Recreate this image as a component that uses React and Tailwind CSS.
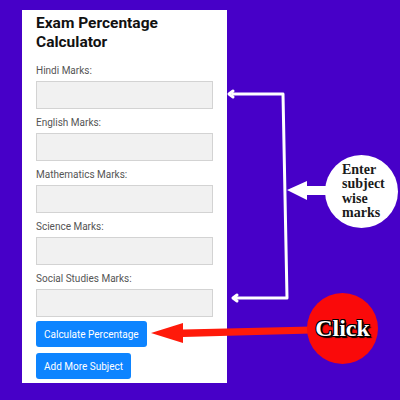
import React from "react";

const subjects = ["Hindi Marks:", "English Marks:", "Mathematics Marks:", "Science Marks:", "Social Studies Marks:"];

function Field({ label }) {
  return (
    <div className="mb-[7px]">
      <label className="block text-[10px] leading-[13px] text-[#555] mb-[4px]">{label}</label>
      <input
        type="text"
        className="block w-full h-[28px] bg-[#f1f1f1] border border-[#d3d3d3] outline-none"
      />
    </div>
  );
}

export default function App() {
  return (
    <div
      className="relative w-[400px] h-[400px] overflow-hidden bg-[#4700c8] pt-[10px] pl-[22px]"
      style={{ fontFamily: "Roboto, 'Liberation Sans', sans-serif" }}
    >
      <div className="w-[205px] h-[373px] bg-white px-[14px] pt-[4px]">
        <h1 className="text-[15.5px] leading-[19px] font-bold text-[#111] mb-[12px]">
          Exam Percentage Calculator
        </h1>
        {subjects.map((s) => (
          <Field key={s} label={s} />
        ))}
        <div className="flex flex-col items-start gap-[6px] -mt-[3px]">
          <button className="h-[26px] px-[8px] rounded-[3px] bg-[#0d84ff] text-white text-[10px]">
            Calculate Percentage
          </button>
          <button className="h-[26px] px-[8px] rounded-[3px] bg-[#0d84ff] text-white text-[10px]">
            Add More Subject
          </button>
        </div>
      </div>

      {/* hand-drawn pointers */}
      <svg className="absolute inset-0 pointer-events-none" width="400" height="400" viewBox="0 0 400 400">
        <g stroke="#ffffff" strokeWidth="3" fill="none" strokeLinejoin="round" strokeLinecap="round">
          <path d="M233 94 L283 94 L287 298 L234 298" />
          <path d="M233 91 L229 94 L233 97" />
          <path d="M237 295 L233 298 L237 301" />
        </g>
        <path d="M287 190 L307 181 L307 186 L328 186 L328 195 L307 195 L307 200 Z" fill="#ffffff" />
        <path d="M151 333 L183 323 L183 329.5 L312 326.5 L312 333.5 L183 337 L183 343 Z" fill="#ff1a0a" />
      </svg>

      <div className="absolute left-[325px] top-[155px] w-[73px] h-[73px] rounded-full bg-white flex items-center pl-[17px]">
        <p
          className="text-[14px] leading-[14.5px] font-bold text-[#1a1a1a]"
          style={{ fontFamily: "'Liberation Serif', 'DejaVu Serif', serif" }}
        >
          Enter
          <br />
          subject
          <br />
          wise
          <br />
          marks
        </p>
      </div>

      <div className="absolute left-[307px] top-[293px] w-[71px] h-[71px] rounded-full bg-[#fa0a0a] flex items-center justify-center">
        <span
          className="text-[24px] leading-none font-bold text-white -mt-[2px]"
          style={{
            fontFamily: "'Liberation Serif', 'DejaVu Serif', serif",
            textShadow:
              "1px 0 0 #000, -1px 0 0 #000, 0 1px 0 #000, 0 -1px 0 #000, 1px 1px 0 #000, -1px -1px 0 #000, 1px -1px 0 #000, -1px 1px 0 #000, 2px 2px 1px #000",
          }}
        >
          Click
        </span>
      </div>
    </div>
  );
}
